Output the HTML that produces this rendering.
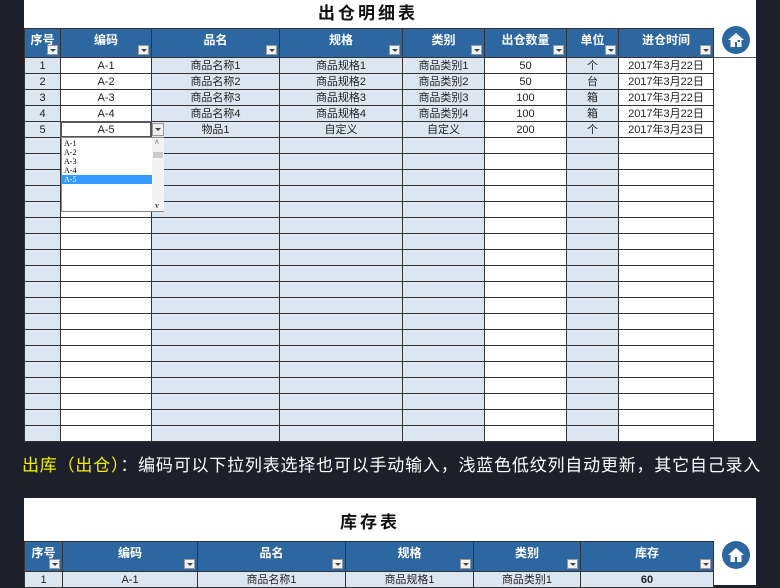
<!DOCTYPE html>
<html><head><meta charset="utf-8"><style>
*{margin:0;padding:0;box-sizing:border-box}
body{width:780px;height:585px;overflow:hidden;background:#1d202b;font-family:"Liberation Sans","Noto Sans CJK SC",sans-serif;position:relative}
.panel{position:absolute;background:#fff}
table{border-collapse:collapse;table-layout:fixed;position:absolute}
td{border:1px solid #333;height:16px;font-size:11px;text-align:center;color:#222;line-height:14px;padding:0;white-space:nowrap;overflow:hidden}
th{background:#2d67a1;color:#fff;font-size:12px;font-weight:bold;border:1px solid #333;position:relative;padding-bottom:8px}
th i{position:absolute;right:2px;bottom:2px;width:11px;height:10px;background:#f2f2f2;border:1px solid #999}
th i:after{content:"";position:absolute;left:2px;top:3px;border-left:3px solid transparent;border-right:3px solid transparent;border-top:3px solid #444}
.b{background:#dce6f1}
.home{position:absolute;width:28px;height:28px;border-radius:50%;background:#2d67a1}
.home svg{position:absolute;left:5px;top:5px}
h1{position:absolute;font-size:17px;font-weight:bold;letter-spacing:3px;color:#111;font-family:"Liberation Sans","Noto Sans CJK SC",sans-serif}
</style></head><body>
<div class="panel" style="left:24px;top:0;width:732px;height:441px"></div>
<h1 style="left:318px;top:-1px">出仓明细表</h1>
<div style="position:absolute;left:713px;top:57px;width:43px;height:1px;background:#555"></div>
<div class="home" style="left:722px;top:26px"><svg width="18" height="18" viewBox="0 0 18 18"><path d="M9 2 L1 9 H3.5 V16 H8 V11 H10 V16 H14.5 V9 H17 Z" fill="#fff"/><rect x="10.5" y="9" width="2.5" height="2" fill="#2d67a1"/></svg></div>
<table style="left:24px;top:28px;width:689px">
<colgroup><col style="width:36px"><col style="width:91px"><col style="width:128px"><col style="width:123px"><col style="width:82px"><col style="width:82px"><col style="width:52px"><col style="width:95px"></colgroup>
<tr style="height:29px"><th>序号<i></i></th><th>编码<i></i></th><th>品名<i></i></th><th>规格<i></i></th><th>类别<i></i></th><th>出仓数量<i></i></th><th>单位<i></i></th><th>进仓时间<i></i></th></tr>
<tr><td class="b">1</td><td>A-1</td><td class="b">商品名称1</td><td class="b">商品规格1</td><td class="b">商品类别1</td><td>50</td><td class="b">个</td><td>2017年3月22日</td></tr>
<tr><td class="b">2</td><td>A-2</td><td class="b">商品名称2</td><td class="b">商品规格2</td><td class="b">商品类别2</td><td>50</td><td class="b">台</td><td>2017年3月22日</td></tr>
<tr><td class="b">3</td><td>A-3</td><td class="b">商品名称3</td><td class="b">商品规格3</td><td class="b">商品类别3</td><td>100</td><td class="b">箱</td><td>2017年3月22日</td></tr>
<tr><td class="b">4</td><td>A-4</td><td class="b">商品名称4</td><td class="b">商品规格4</td><td class="b">商品类别4</td><td>100</td><td class="b">箱</td><td>2017年3月22日</td></tr>
<tr><td class="b">5</td><td>A-5</td><td class="b">物品1</td><td class="b">自定义</td><td class="b">自定义</td><td>200</td><td class="b">个</td><td>2017年3月23日</td></tr>
<tr><td class="b"></td><td></td><td class="b"></td><td class="b"></td><td class="b"></td><td></td><td class="b"></td><td></td></tr>
<tr><td class="b"></td><td></td><td class="b"></td><td class="b"></td><td class="b"></td><td></td><td class="b"></td><td></td></tr>
<tr><td class="b"></td><td></td><td class="b"></td><td class="b"></td><td class="b"></td><td></td><td class="b"></td><td></td></tr>
<tr><td class="b"></td><td></td><td class="b"></td><td class="b"></td><td class="b"></td><td></td><td class="b"></td><td></td></tr>
<tr><td class="b"></td><td></td><td class="b"></td><td class="b"></td><td class="b"></td><td></td><td class="b"></td><td></td></tr>
<tr><td class="b"></td><td></td><td class="b"></td><td class="b"></td><td class="b"></td><td></td><td class="b"></td><td></td></tr>
<tr><td class="b"></td><td></td><td class="b"></td><td class="b"></td><td class="b"></td><td></td><td class="b"></td><td></td></tr>
<tr><td class="b"></td><td></td><td class="b"></td><td class="b"></td><td class="b"></td><td></td><td class="b"></td><td></td></tr>
<tr><td class="b"></td><td></td><td class="b"></td><td class="b"></td><td class="b"></td><td></td><td class="b"></td><td></td></tr>
<tr><td class="b"></td><td></td><td class="b"></td><td class="b"></td><td class="b"></td><td></td><td class="b"></td><td></td></tr>
<tr><td class="b"></td><td></td><td class="b"></td><td class="b"></td><td class="b"></td><td></td><td class="b"></td><td></td></tr>
<tr><td class="b"></td><td></td><td class="b"></td><td class="b"></td><td class="b"></td><td></td><td class="b"></td><td></td></tr>
<tr><td class="b"></td><td></td><td class="b"></td><td class="b"></td><td class="b"></td><td></td><td class="b"></td><td></td></tr>
<tr><td class="b"></td><td></td><td class="b"></td><td class="b"></td><td class="b"></td><td></td><td class="b"></td><td></td></tr>
<tr><td class="b"></td><td></td><td class="b"></td><td class="b"></td><td class="b"></td><td></td><td class="b"></td><td></td></tr>
<tr><td class="b"></td><td></td><td class="b"></td><td class="b"></td><td class="b"></td><td></td><td class="b"></td><td></td></tr>
<tr><td class="b"></td><td></td><td class="b"></td><td class="b"></td><td class="b"></td><td></td><td class="b"></td><td></td></tr>
<tr><td class="b"></td><td></td><td class="b"></td><td class="b"></td><td class="b"></td><td></td><td class="b"></td><td></td></tr>
<tr><td class="b"></td><td></td><td class="b"></td><td class="b"></td><td class="b"></td><td></td><td class="b"></td><td></td></tr>
</table>
<div style="position:absolute;left:60px;top:121px;width:92px;height:17px;border:2px solid #555"></div>
<div style="position:absolute;left:152px;top:123px;width:12px;height:13px;background:#eee;border:1px solid #999"><div style="position:absolute;left:2px;top:4px;border-left:3px solid transparent;border-right:3px solid transparent;border-top:3px solid #444"></div></div>
<div style="position:absolute;left:61px;top:137px;width:103px;height:75px;background:#fff;border:1px solid #888;font-family:'Liberation Serif',serif;font-size:8px;line-height:9px;color:#000">
<div style="padding-left:2px;padding-top:1px">A-1</div><div style="padding-left:2px">A-2</div><div style="padding-left:2px">A-3</div><div style="padding-left:2px">A-4</div><div style="padding-left:2px;background:#3399ff;color:#fff;width:90px">A-5</div>
<div style="position:absolute;left:90px;top:0;width:12px;height:73px;background:#f4f4f4"><div style="position:absolute;top:14px;left:1px;width:10px;height:6px;background:#ccc"></div><div style="position:absolute;top:0;left:3px;font-size:8px">^</div><div style="position:absolute;bottom:1px;left:3px;font-size:8px">v</div></div>
</div>
<div style="position:absolute;left:22px;top:451px;font-size:17px;letter-spacing:0.8px;color:#fff;white-space:nowrap;font-family:'Liberation Sans','Noto Sans CJK SC',sans-serif"><span style="color:#f0f000">出库（出仓）</span>：编码可以下拉列表选择也可以手动输入，浅蓝色低纹列自动更新，其它自己录入</div>
<div class="panel" style="left:24px;top:498px;width:732px;height:87px"></div>
<h1 style="left:340px;top:508px">库存表</h1>
<div class="home" style="left:722px;top:541px"><svg width="18" height="18" viewBox="0 0 18 18"><path d="M9 2 L1 9 H3.5 V16 H8 V11 H10 V16 H14.5 V9 H17 Z" fill="#fff"/></svg></div>
<table style="left:24px;top:541px;width:689px">
<colgroup><col style="width:38px"><col style="width:135px"><col style="width:148px"><col style="width:128px"><col style="width:107px"><col style="width:133px"></colgroup>
<tr style="height:30px"><th>序号<i></i></th><th>编码<i></i></th><th>品名<i></i></th><th>规格<i></i></th><th>类别<i></i></th><th>库存<i></i></th></tr>
<tr><td class="b">1</td><td class="b">A-1</td><td class="b">商品名称1</td><td class="b">商品规格1</td><td class="b">商品类别1</td><td class="b"><b>60</b></td></tr>
</table>
</body></html>
